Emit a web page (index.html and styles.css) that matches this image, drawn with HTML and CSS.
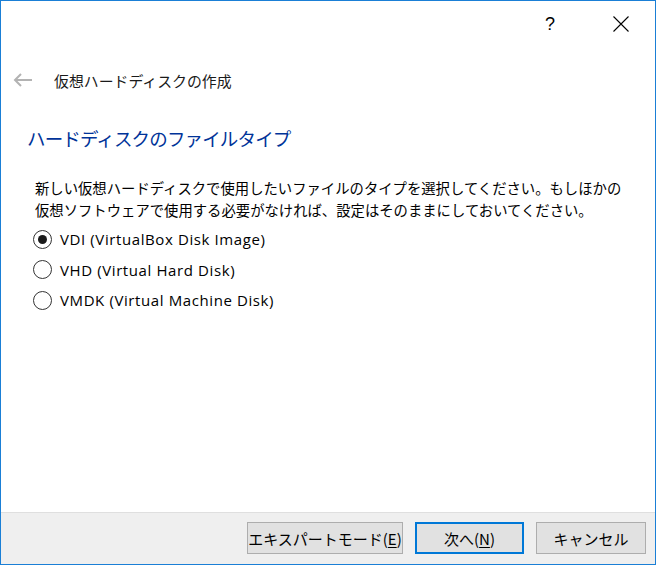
FILE: index.html
```html
<!DOCTYPE html>
<html lang="ja">
<head>
<meta charset="utf-8">
<title>仮想ハードディスクの作成</title>
<link rel="stylesheet" href="styles.css">
</head>
<body>
<div class="window">
  <div class="titlebar">
    <span class="help">?</span>
    <span class="close">
      <svg width="16" height="16" viewBox="0 0 16 16"><path d="M0.5 0.5 L15.5 15.5 M15.5 0.5 L0.5 15.5" stroke="#000" stroke-width="1.1" fill="none"/></svg>
    </span>
  </div>
  <div class="header">
    <svg class="back" width="20" height="14" viewBox="0 0 20 14"><path d="M19 7 H2 M8 1 L2 7 L8 13" stroke="#b3b3b3" stroke-width="2" fill="none"/></svg>
    <span class="wtitle">仮想ハードディスクの作成</span>
  </div>
  <div class="main">
    <h1 class="heading">ハードディスクのファイルタイプ</h1>
    <p class="desc">新しい仮想ハードディスクで使用したいファイルのタイプを選択してください。もしほかの<br>仮想ソフトウェアで使用する必要がなければ、設定はそのままにしておいてください。</p>
    <div class="options">
      <label class="opt"><span class="radio checked"></span><span>VDI (VirtualBox Disk Image)</span></label>
      <label class="opt"><span class="radio"></span><span>VHD (Virtual Hard Disk)</span></label>
      <label class="opt"><span class="radio"></span><span>VMDK (Virtual Machine Disk)</span></label>
    </div>
  </div>
  <div class="footer">
    <button class="btn btn-expert">エキスパートモード(<u>E</u>)</button>
    <button class="btn btn-next">次へ(<u>N</u>)</button>
    <button class="btn btn-cancel">キャンセル</button>
  </div>
</div>
</body>
</html>
```
FILE: styles.css
```css
html, body {
  margin: 0;
  padding: 0;
  background: #ffffff;
}
body {
  font-family: "Noto Sans CJK JP", "Noto Sans", sans-serif;
  color: #000;
}
.window {
  box-sizing: border-box;
  width: 656px;
  height: 565px;
  border: 1px solid #1a7fd6;
  display: flex;
  flex-direction: column;
  background: #fff;
}
.titlebar {
  height: 46px;
  display: flex;
  justify-content: flex-end;
  align-items: center;
  flex: none;
}
.help {
  font-family: "Liberation Sans", sans-serif;
  font-size: 18px;
  width: 20px;
  text-align: center;
  margin-right: 53px;
  line-height: 1;
}
.close {
  width: 16px;
  height: 16px;
  margin-right: 26px;
  display: flex;
}
.header {
  height: 70px;
  display: flex;
  align-items: center;
  padding-left: 12px;
  flex: none;
  margin-top: -2px;
}
.back {
  margin-right: 21px;
}
.wtitle {
  font-size: 14.9px;
  color: #1a1a1a;
}
.main {
  flex: 1;
  padding-left: 26px;
  padding-right: 26px;
}
.heading {
  margin: 0;
  font-weight: normal;
  font-size: 18.5px;
  letter-spacing: -0.85px;
  color: #003399;
  line-height: 26px;
  margin-top: 10px;
}
.desc {
  margin: 26px 0 0 8px;
  font-size: 14.35px;
  line-height: 22px;
  color: #000;
}
.options {
  margin-top: 3px;
  margin-left: 6px;
  display: flex;
  flex-direction: column;
}
.opt {
  display: flex;
  align-items: center;
  height: 30.5px;
  font-family: "Open Sans", "Noto Sans CJK JP", sans-serif;
  font-size: 15px;
  letter-spacing: 0.6px;
}
.radio {
  box-sizing: border-box;
  width: 19px;
  height: 19px;
  border: 1px solid #333;
  border-radius: 50%;
  margin-right: 8px;
  display: flex;
  align-items: center;
  justify-content: center;
}
.radio.checked::after {
  content: "";
  width: 9px;
  height: 9px;
  border-radius: 50%;
  background: #1a1a1a;
}
.footer {
  flex: none;
  border-top: 1px solid #dfdfdf;
  background: #efefef;
  display: flex;
  justify-content: flex-end;
  align-items: flex-start;
  padding-top: 9px;
  padding-right: 9px;
  gap: 12px;
  box-sizing: border-box;
  height: 52px;
}
.btn {
  box-sizing: border-box;
  height: 32px;
  border: 1px solid #adadad;
  background: #e1e1e1;
  font-family: "Noto Sans CJK JP", sans-serif;
  font-size: 15px;
  color: #000;
  padding: 0;
  margin: 0;
}
.btn u {
  text-underline-offset: 2px;
}
.btn-expert { width: 156px; }
.btn-next { width: 109px; border: 2px solid #0078d7; }
.btn-cancel { width: 110px; }
```
